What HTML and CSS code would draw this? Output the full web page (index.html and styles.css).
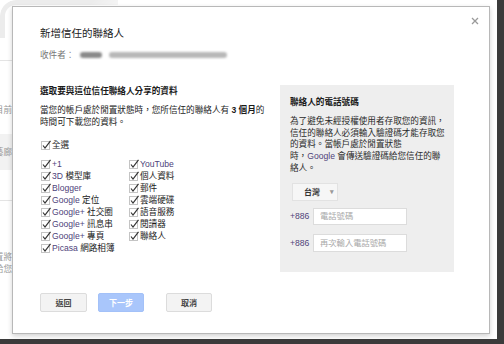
FILE: index.html
```html
<!DOCTYPE html>
<html lang="zh-Hant">
<head>
    <meta charset="UTF-8">
    <title>新增信任的聯絡人</title>
    <link rel="stylesheet" href="styles.css">
</head>
<body>
    <div class="shot">
        <div class="page">
            <div class="page-arc"></div>
            <div class="page-side">
                <div class="side-line"></div>
                <div class="side-text t1"><span>帳戶目前</span></div>
                <div class="side-box"><span>相簿藝廊</span></div>
                <div class="side-line l2"></div>
                <div class="side-text t3"><span>閒置將</span></div>
                <div class="side-text"><span>傳送給您</span></div>
            </div>
        </div>

        <div class="dialog">
            <button class="close" aria-label="關閉">
                <svg width="8" height="8" viewBox="0 0 8 8"><path d="M1 1L7 7M7 1L1 7" stroke="#9a9a9a" stroke-width="1.3"/></svg>
            </button>
            <h1>新增信任的聯絡人</h1>
            <div class="to">收件者：<span class="blur b1"></span><span class="blur b2"></span></div>

            <div class="main">
                <div class="left">
                    <h2>選取要與這位信任聯絡人分享的資料</h2>
                    <p class="desc">當您的帳戶處於閒置狀態時，您所信任的聯絡人有 <b>3 個月</b>的<br>時間可下載您的資料。</p>
                    <div class="item all"><svg class="cb" viewBox="0 0 10 10"><rect x="0.5" y="1.5" width="8" height="8" fill="none" stroke="#c4c4c4"/><path d="M2 5.5L4 8L9.5 0.8" fill="none" stroke="#333" stroke-width="1.2"/></svg>全選</div>
                    <div class="grid">
                        <div class="item"><svg class="cb" viewBox="0 0 10 10"><rect x="0.5" y="1.5" width="8" height="8" fill="none" stroke="#c4c4c4"/><path d="M2 5.5L4 8L9.5 0.8" fill="none" stroke="#333" stroke-width="1.2"/></svg><span class="lat">+1</span></div>
                        <div class="item"><svg class="cb" viewBox="0 0 10 10"><rect x="0.5" y="1.5" width="8" height="8" fill="none" stroke="#c4c4c4"/><path d="M2 5.5L4 8L9.5 0.8" fill="none" stroke="#333" stroke-width="1.2"/></svg><span class="lat">3D</span>&nbsp;模型庫</div>
                        <div class="item"><svg class="cb" viewBox="0 0 10 10"><rect x="0.5" y="1.5" width="8" height="8" fill="none" stroke="#c4c4c4"/><path d="M2 5.5L4 8L9.5 0.8" fill="none" stroke="#333" stroke-width="1.2"/></svg><span class="lat">Blogger</span></div>
                        <div class="item"><svg class="cb" viewBox="0 0 10 10"><rect x="0.5" y="1.5" width="8" height="8" fill="none" stroke="#c4c4c4"/><path d="M2 5.5L4 8L9.5 0.8" fill="none" stroke="#333" stroke-width="1.2"/></svg><span class="lat">Google</span>&nbsp;定位</div>
                        <div class="item"><svg class="cb" viewBox="0 0 10 10"><rect x="0.5" y="1.5" width="8" height="8" fill="none" stroke="#c4c4c4"/><path d="M2 5.5L4 8L9.5 0.8" fill="none" stroke="#333" stroke-width="1.2"/></svg><span class="lat">Google+</span>&nbsp;社交圈</div>
                        <div class="item"><svg class="cb" viewBox="0 0 10 10"><rect x="0.5" y="1.5" width="8" height="8" fill="none" stroke="#c4c4c4"/><path d="M2 5.5L4 8L9.5 0.8" fill="none" stroke="#333" stroke-width="1.2"/></svg><span class="lat">Google+</span>&nbsp;訊息串</div>
                        <div class="item"><svg class="cb" viewBox="0 0 10 10"><rect x="0.5" y="1.5" width="8" height="8" fill="none" stroke="#c4c4c4"/><path d="M2 5.5L4 8L9.5 0.8" fill="none" stroke="#333" stroke-width="1.2"/></svg><span class="lat">Google+</span>&nbsp;專頁</div>
                        <div class="item"><svg class="cb" viewBox="0 0 10 10"><rect x="0.5" y="1.5" width="8" height="8" fill="none" stroke="#c4c4c4"/><path d="M2 5.5L4 8L9.5 0.8" fill="none" stroke="#333" stroke-width="1.2"/></svg><span class="lat">Picasa</span>&nbsp;網路相簿</div>
                        <div class="item"><svg class="cb" viewBox="0 0 10 10"><rect x="0.5" y="1.5" width="8" height="8" fill="none" stroke="#c4c4c4"/><path d="M2 5.5L4 8L9.5 0.8" fill="none" stroke="#333" stroke-width="1.2"/></svg><span class="lat">YouTube</span></div>
                        <div class="item"><svg class="cb" viewBox="0 0 10 10"><rect x="0.5" y="1.5" width="8" height="8" fill="none" stroke="#c4c4c4"/><path d="M2 5.5L4 8L9.5 0.8" fill="none" stroke="#333" stroke-width="1.2"/></svg>個人資料</div>
                        <div class="item"><svg class="cb" viewBox="0 0 10 10"><rect x="0.5" y="1.5" width="8" height="8" fill="none" stroke="#c4c4c4"/><path d="M2 5.5L4 8L9.5 0.8" fill="none" stroke="#333" stroke-width="1.2"/></svg>郵件</div>
                        <div class="item"><svg class="cb" viewBox="0 0 10 10"><rect x="0.5" y="1.5" width="8" height="8" fill="none" stroke="#c4c4c4"/><path d="M2 5.5L4 8L9.5 0.8" fill="none" stroke="#333" stroke-width="1.2"/></svg>雲端硬碟</div>
                        <div class="item"><svg class="cb" viewBox="0 0 10 10"><rect x="0.5" y="1.5" width="8" height="8" fill="none" stroke="#c4c4c4"/><path d="M2 5.5L4 8L9.5 0.8" fill="none" stroke="#333" stroke-width="1.2"/></svg>語音服務</div>
                        <div class="item"><svg class="cb" viewBox="0 0 10 10"><rect x="0.5" y="1.5" width="8" height="8" fill="none" stroke="#c4c4c4"/><path d="M2 5.5L4 8L9.5 0.8" fill="none" stroke="#333" stroke-width="1.2"/></svg>閱讀器</div>
                        <div class="item"><svg class="cb" viewBox="0 0 10 10"><rect x="0.5" y="1.5" width="8" height="8" fill="none" stroke="#c4c4c4"/><path d="M2 5.5L4 8L9.5 0.8" fill="none" stroke="#333" stroke-width="1.2"/></svg>聯絡人</div>
                    </div>
                </div>

                <div class="panel">
                    <h3>聯絡人的電話號碼</h3>
                    <p class="panel-text">為了避免未經授權使用者存取您的資訊，<br>信任的聯絡人必須輸入驗證碼才能存取您<br>的資料。當帳戶處於閒置狀態<br>時，<span class="lat">Google</span> 會傳送驗證碼給您信任的聯<br>絡人。</p>
                    <div class="country">台灣<span class="arrow">▾</span></div>
                    <div class="phone-row">
                        <span class="code">+886</span>
                        <input type="text" placeholder="電話號碼">
                    </div>
                    <div class="phone-row second">
                        <span class="code">+886</span>
                        <input type="text" placeholder="再次輸入電話號碼">
                    </div>
                </div>
            </div>

            <div class="actions">
                <button class="btn">返回</button>
                <button class="btn primary">下一步</button>
                <button class="btn cancel">取消</button>
            </div>
        </div>
    </div>
</body>
</html>
```

FILE: styles.css
```css
* {
    box-sizing: border-box;
}
body {
    margin: 0;
    font-family: 'Liberation Sans', 'Noto Sans CJK TC', sans-serif;
    background: #fff;
}
.shot {
    position: relative;
    width: 504px;
    height: 344px;
    overflow: hidden;
    background: #fff;
    border-right: 7px solid #3b3b3b;
    border-bottom: 5px solid #3b3b3b;
}

/* faded page behind the dialog */
.page {
    position: relative;
    height: 100%;
}
.page-arc {
    width: 118px;
    height: 38px;
    border-top: 5px solid #ececec;
    border-left: 5px solid #ececec;
    border-top-left-radius: 16px;
    -webkit-mask-image: linear-gradient(135deg, #000 60%, transparent 100%);
}
.page-side {
    position: absolute;
    top: 0;
    left: 0;
    width: 12px;
    height: 100%;
    overflow: hidden;
}
.side-line {
    margin-top: 60px;
    border-top: 1px solid #e4e4e4;
}
.side-line.l2 {
    margin-top: 30px;
}
.side-text,
.side-box {
    display: flex;
    justify-content: flex-end;
    white-space: nowrap;
    font-size: 8.6px;
    line-height: 12px;
    color: #9a9a9a;
}
.side-text.t1 {
    margin-top: 43px;
}
.side-box {
    margin-top: 18px;
    height: 36px;
    align-items: center;
    background: #f2f2f2;
}
.side-text.t3 {
    margin-top: 50px;
}

/* dialog */
.dialog {
    position: absolute;
    left: 12px;
    top: 6px;
    width: 478px;
    height: 328px;
    background: #fff;
    border: 1px solid #b8b8b8;
    box-shadow: 0 2px 5px rgba(0, 0, 0, 0.18);
    padding: 19px 27px 0;
}
.close {
    position: absolute;
    top: 10px;
    right: 10px;
    width: 8px;
    height: 8px;
    padding: 0;
    border: none;
    background: none;
    line-height: 0;
}
h1 {
    margin: 0;
    font-size: 10.5px;
    line-height: 14px;
    font-weight: normal;
    color: #222;
}
.to {
    display: flex;
    align-items: center;
    margin-top: 9px;
    font-size: 8.6px;
    line-height: 12px;
    color: #777;
}
.blur {
    height: 6px;
    border-radius: 3px;
    filter: blur(1.2px);
}
.b1 {
    width: 22px;
    margin-left: 6px;
    background: #8a8a8a;
}
.b2 {
    width: 118px;
    margin-left: 7px;
    background: #b8b8b8;
}

.main {
    display: flex;
    margin-top: 24px;
}
.left {
    width: 240px;
    font-size: 8.6px;
    line-height: 12px;
    color: #1a1a1a;
}
h2, h3 {
    margin: 0;
    font-size: 8.6px;
    line-height: 12px;
    font-weight: bold;
    color: #1a1a1a;
}
.desc {
    margin: 7px 0 0;
    white-space: nowrap;
}
.item {
    display: flex;
    align-items: center;
    white-space: nowrap;
    height: 12px;
}
.cb {
    width: 10px;
    height: 10px;
    margin: 0 1px;
    flex: none;
}
.all {
    margin-top: 11px;
}
.grid {
    display: grid;
    grid-template-columns: 88px auto;
    grid-template-rows: repeat(8, 12px);
    grid-auto-flow: column;
    margin-top: 7px;
}
.lat {
    color: #4e437a;
}

/* phone panel */
.panel {
    width: 174px;
    height: 187px;
    background: #eeeeee;
    padding: 11px 0 0 10px;
    font-size: 8.6px;
}
.panel-text {
    margin: 8px 0 0;
    line-height: 11.7px;
    color: #2a2a2a;
    white-space: nowrap;
}
.country {
    display: flex;
    align-items: center;
    width: 46px;
    height: 18px;
    margin: 8px 0 0 2px;
    padding-left: 11px;
    background: #f6f6f6;
    border: 1px solid #e2e2e2;
    font-weight: bold;
    font-size: 8px;
    color: #333;
}
.arrow {
    margin-left: 10px;
    font-size: 7px;
    color: #999;
}
.phone-row {
    display: flex;
    align-items: center;
    margin-top: 7px;
}
.phone-row.second {
    margin-top: 9px;
}
.code {
    width: 23px;
    color: #4e437a;
}
.phone-row input {
    width: 94px;
    height: 17px;
    padding: 0 0 0 6px;
    border: 1px solid #dcdcdc;
    border-radius: 0;
    background: #fff;
    font-family: inherit;
    font-size: 8.3px;
    outline: none;
}
.phone-row.second input {
    height: 18px;
}
.phone-row input::placeholder {
    color: #a8a8a8;
}

/* buttons */
.actions {
    display: flex;
    margin-top: 21px;
}
.btn {
    width: 47px;
    height: 19px;
    padding: 0;
    border: 1px solid #dcdcdc;
    border-radius: 2px;
    background: #f3f3f3;
    font-family: inherit;
    font-size: 8px;
    font-weight: bold;
    color: #444;
}
.btn.primary {
    width: 46px;
    margin-left: 11px;
    background: #a9c6fb;
    border-color: #a3c1f8;
    color: #fff;
}
.btn.cancel {
    width: 46px;
    margin-left: 22px;
}
```
